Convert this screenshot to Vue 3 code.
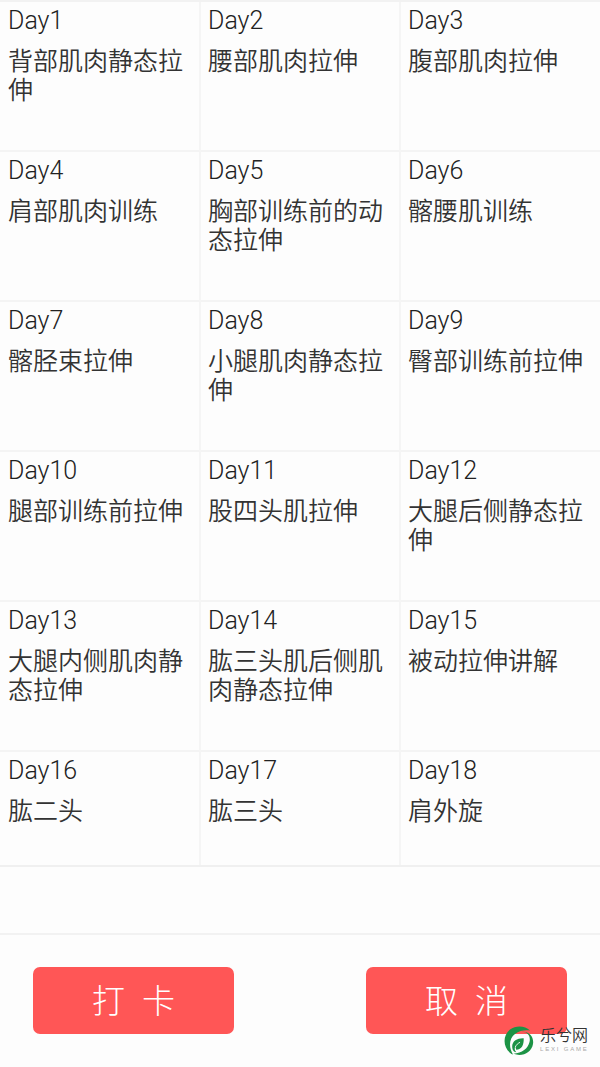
<template>
  <div class="pagina">
    <div class="grade">
      <div v-for="(nome, i) in treinos" :key="i" class="celula">
        <div class="dia">Day{{ i + 1 }}</div>
        <div class="nome">{{ nome }}</div>
      </div>
    </div>

    <div class="espaco"></div>

    <div class="acoes">
      <button type="button">打 卡</button>
      <button type="button">取 消</button>
    </div>

    <div class="marca">
      <svg width="30" height="30" viewBox="0 0 30 30">
        <path
          d="M26 4.500C21-.5 12-1 6 3.500-1.500 9.500-1.500 21.500 7.500 28L9 28.500C4.500 21 5 12.500 11 8 15.500 4.600 21 3.800 26 4.500Z"
          fill="#1c9345"
        />
        <path
          d="M15 6C23 4.500 27 9.500 25.500 16 24 22.500 18 27 9.500 27.800 18 31 27.500 27 29 18 30.200 10.500 25 4 15 6Z"
          fill="#1c9345"
        />
        <path
          d="M19.700 12.300C13.500 12 8.500 14.800 8.200 20 8 24 10 26.300 12.300 26.200 10.500 24.500 10.300 22.300 11.300 20.300L12.200 23.700C17.800 23.500 20 19 19.700 12.300Z"
          fill="#1c9345"
        />
        <path d="M11.300 21C12.300 18.800 14 17.300 16 16.300" fill="none" stroke="#fff" stroke-width="0.9" />
      </svg>
      <div class="marca-texto">
        <span class="marca-nome">乐兮网</span>
        <span class="marca-sub">LEXI GAME</span>
      </div>
    </div>
  </div>
</template>

<script setup>
// treinos na ordem dos dias
const treinos = [
  '背部肌肉静态拉伸',
  '腰部肌肉拉伸',
  '腹部肌肉拉伸',
  '肩部肌肉训练',
  '胸部训练前的动态拉伸',
  '髂腰肌训练',
  '髂胫束拉伸',
  '小腿肌肉静态拉伸',
  '臀部训练前拉伸',
  '腿部训练前拉伸',
  '股四头肌拉伸',
  '大腿后侧静态拉伸',
  '大腿内侧肌肉静态拉伸',
  '肱三头肌后侧肌肉静态拉伸',
  '被动拉伸讲解',
  '肱二头',
  '肱三头',
  '肩外旋'
]
</script>

<style>
body {
  margin: 0;
  background: #fdfdfd;
}
</style>

<style scoped>
.pagina {
  position: relative;
  width: 600px;
  height: 1067px;
  overflow: hidden;
  background: #fdfdfd;
  color: #333;
  font-family: Roboto, "Noto Sans CJK SC", sans-serif;
  font-weight: 300;
}

.grade {
  display: grid;
  grid-template-columns: 201px 200px 199px;
  grid-template-rows: repeat(5, 150px) 113px;
  border-top: 2px solid #f2f2f2;
  border-bottom: 2px solid #f0f0f0;
}

.celula {
  box-sizing: border-box;
  padding: 4px 7px 0;
  border-right: 2px solid #f5f5f5;
  border-bottom: 2px solid #f4f4f4;
}

.celula:nth-child(3n + 1) {
  padding-left: 8px;
}

.celula:nth-child(3n) {
  border-right: none;
}

.celula:nth-child(n + 16) {
  border-bottom: none;
}

.dia {
  color: #222;
  font-size: 25px;
  font-weight: 330;
  line-height: 29px;
}

.nome {
  margin-top: 12px;
  font-size: 25px;
  font-weight: 350;
  line-height: 29px;
  word-break: break-all;
}

.espaco {
  height: 66px;
  border-bottom: 2px solid #f2f2f2;
}

.acoes {
  display: flex;
  justify-content: space-between;
  padding: 32px 33px 0;
}

.acoes button {
  width: 201px;
  height: 67px;
  padding: 0 0 4px;
  border: none;
  border-radius: 7px;
  background: #ff5656;
  color: #fff;
  font-family: Roboto, "Noto Sans CJK SC", sans-serif;
  font-size: 33px;
  font-weight: 300;
  word-spacing: 9px;
}

.marca {
  position: absolute;
  left: 504px;
  top: 1026px;
  display: flex;
}

.marca-texto {
  display: flex;
  flex-direction: column;
  margin-left: 6px;
}

.marca-nome {
  color: #333;
  font-size: 16px;
  font-weight: 350;
  line-height: 19px;
}

.marca-sub {
  color: #aaa;
  font-family: "Liberation Sans", sans-serif;
  font-size: 6px;
  line-height: 8px;
  letter-spacing: 1.800px;
  white-space: nowrap;
}
</style>
